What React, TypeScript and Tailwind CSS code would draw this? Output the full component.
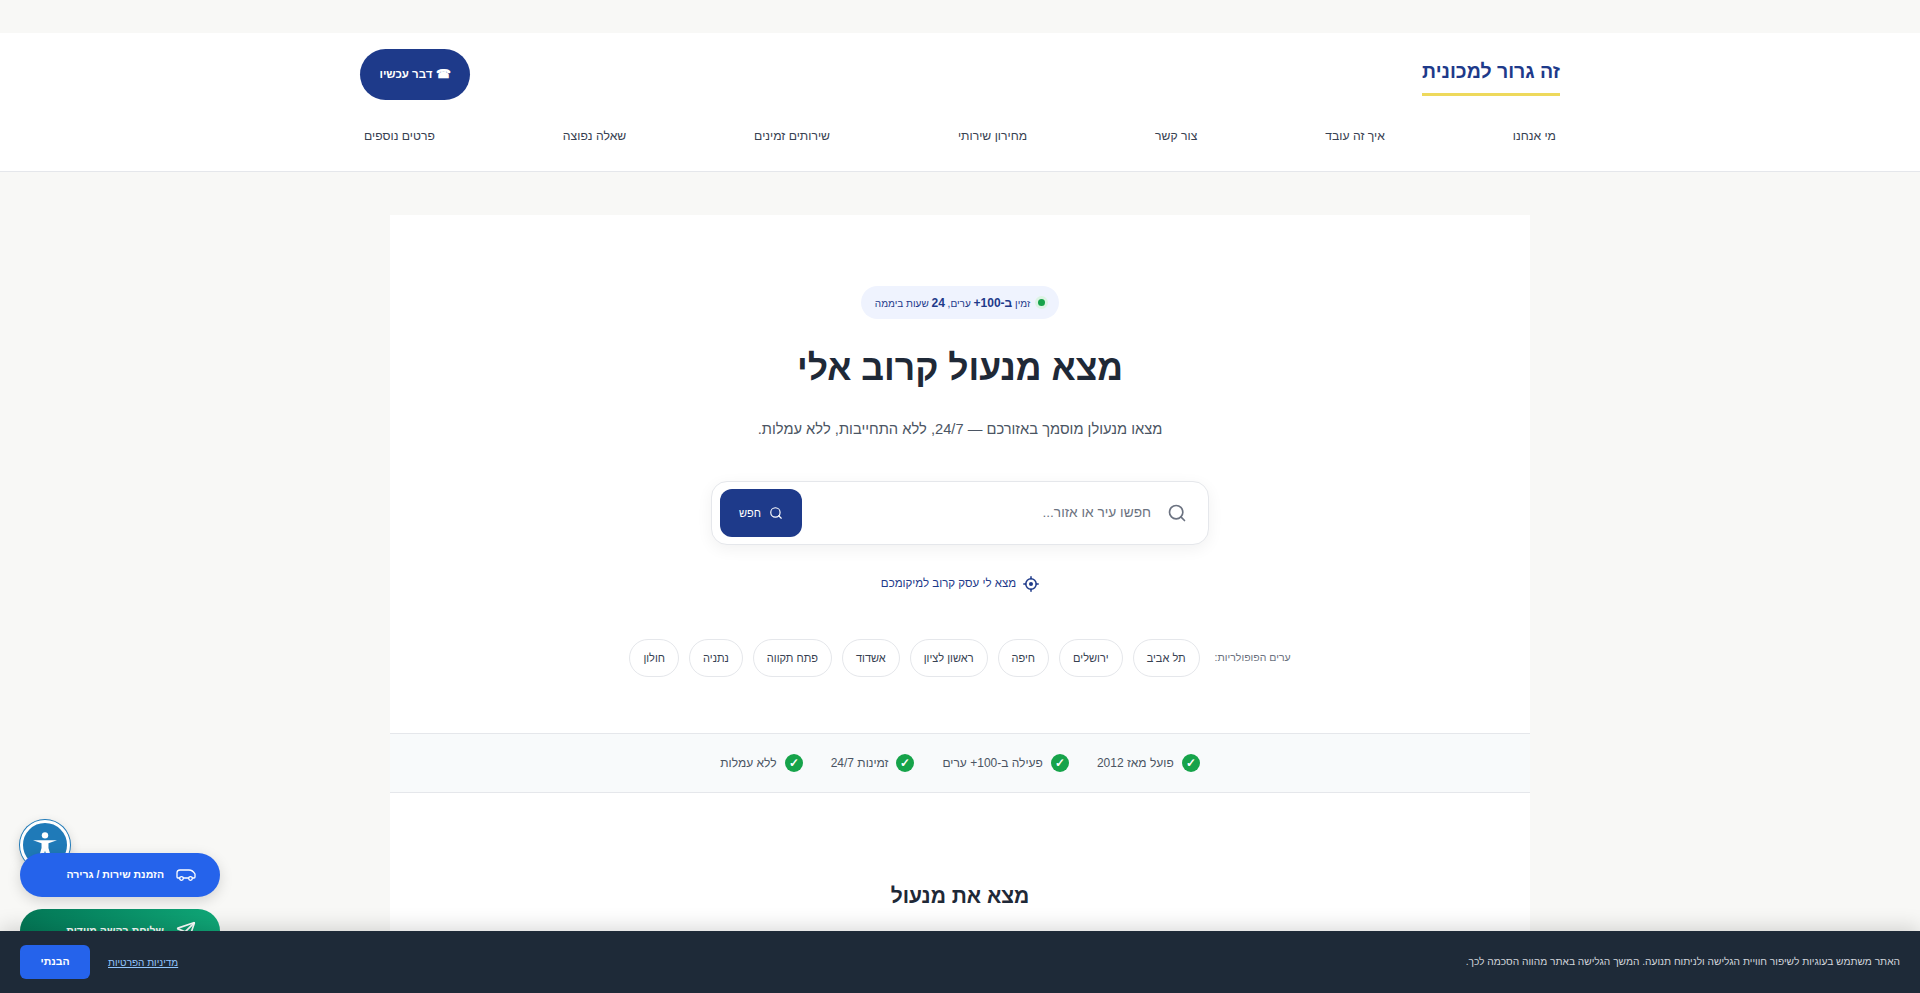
import { Search, Send } from "lucide-react";

const NAV = ["מי אנחנו", "איך זה עובד", "צור קשר", "מחירון שירותי", "שירותים זמינים", "שאלה נפוצה", "פרטים נוספים"];
const CITIES = ["תל אביב", "ירושלים", "חיפה", "ראשון לציון", "אשדוד", "פתח תקווה", "נתניה", "חולון"];
const TRUST = ["פועל מאז 2012", "פעילה ב-100+ ערים", "זמינות 24/7", "ללא עמלות"];

export default function App() {
  return (
    <div dir="rtl" className="relative h-screen overflow-hidden bg-[#f8f8f6] font-['Liberation_Sans',sans-serif] text-[#1f2937]">
      <header className="mt-[33px] h-[139px] border-b border-[#e5e7eb] bg-white">
        <div className="mx-auto w-[1200px]">
          <div className="flex h-[67px] items-start justify-between pt-[16px]">
            <div className="mt-[6px] border-b-[3px] border-[#eed95c] pb-[5px] text-[19.5px] font-bold leading-[33px] text-[#1e3a8a]">זה גרור למכונית</div>
            <button className="flex h-[51px] w-[110px] items-center justify-center rounded-full bg-[#1e3a8a] text-[11.5px] font-bold text-white">☎ דבר עכשיו</button>
          </div>
          <nav className="mt-[27px] flex justify-between px-[4px] text-[12.2px] leading-[18px] text-[#374151]">
            {NAV.map((n) => (
              <a key={n}>{n}</a>
            ))}
          </nav>
        </div>
      </header>

      <main className="mx-auto mt-[43px] w-[1140px] bg-white pb-[200px]">
        <section className="flex flex-col items-center pt-[71px]">
          <div className="flex h-[33px] items-center gap-[8px] rounded-full bg-[#eff3fe] px-[14px] text-[10px] text-[#1e3a8a]">
            <span className="h-[7px] w-[7px] rounded-full bg-[#16a34a] shadow-[0_0_0_3px_#dcf3e4]" />
            <span>
              זמין <b className="text-xs">ב-100+</b> ערים, <b className="text-xs">24</b> שעות ביממה
            </span>
          </div>
          <h1 className="mt-[21px] text-[35.5px] font-bold leading-[56px] text-[#1f2937]">מצא מנעול קרוב אלי</h1>
          <p className="mt-[20px] text-[14.7px] leading-[27px] text-[#4b5563]">מצאו מנעולן מוסמך באזורכם — 24/7, ללא התחייבות, ללא עמלות.</p>

          <div className="mt-[38px] flex h-[64px] w-[498px] items-center justify-between rounded-[16px] border border-[#e5e7eb] bg-white pl-[8px] pr-[21px] shadow-[0_4px_16px_rgba(0,0,0,0.06)]">
            <div className="flex items-center gap-[16px] text-[13.7px] text-[#6b7280]">
              <Search className="h-[20px] w-[20px]" />
              <span>חפשו עיר או אזור...</span>
            </div>
            <button className="flex h-[48px] w-[82px] items-center justify-center gap-[8px] rounded-[12px] bg-[#1e3a8a] text-[11px] text-white">
              <Search className="h-[14px] w-[14px]" />
              <span>חפש</span>
            </button>
          </div>

          <div className="mt-[30px] flex h-[17px] items-center gap-[7px] text-[11.5px] text-[#1e3a8a]">
            <svg viewBox="0 0 16 16" className="h-[16px] w-[16px]" fill="none" stroke="currentColor" strokeWidth="1.5" strokeLinecap="round">
              <circle cx="8" cy="8" r="5.2" />
              <circle cx="8" cy="8" r="2" fill="currentColor" stroke="none" />
              <path d="M8 0.8V2.8M8 13.2V15.2M0.8 8H2.8M13.2 8H15.2" />
            </svg>
            <span>מצא לי עסק קרוב למיקומכם</span>
          </div>

          <div className="mt-[47px] flex items-center gap-[10px]">
            <span className="ml-[5px] text-[10.5px] text-[#6b7280]">ערים הפופולריות:</span>
            {CITIES.map((c) => (
              <span key={c} className="flex h-[38px] items-center rounded-full border border-[#e5e7eb] bg-white px-[13px] text-[11px] text-[#374151]">
                {c}
              </span>
            ))}
          </div>
        </section>

        <div className="mt-[56px] flex h-[60px] items-center justify-center gap-[28px] border-y border-[#e5e7eb] bg-[#f8fafb] text-xs text-[#4b5563]">
          {TRUST.map((t) => (
            <div key={t} className="flex items-center gap-[8px]">
              <span className="flex h-[18px] w-[18px] items-center justify-center rounded-full bg-[#16a34a] text-[12px] font-bold text-white">✓</span>
              <span>{t}</span>
            </div>
          ))}
        </div>

        <h2 className="mt-[85px] text-center text-[21px] font-bold leading-[36px] text-[#1f2937]">מצא את מנעול</h2>
      </main>

      <div className="absolute left-[20px] top-[820px] flex h-[50px] w-[50px] items-center justify-center rounded-full border-[3px] border-white bg-[#1f7ab8] shadow-[0_0_0_1px_#1f7ab8,0_4px_12px_rgba(0,0,0,0.2)]">
        <svg viewBox="0 0 24 24" className="mb-[2px] h-[32px] w-[32px]" fill="#fff">
          <circle cx="12" cy="5.5" r="2.4" />
          <path d="M3 9.2H21L14.6 11.4V15L16.6 22H13.6L12 17L10.4 22H7.4L9.4 15V11.4Z" />
        </svg>
      </div>
      <div className="absolute left-[20px] top-[853px] flex h-[44px] w-[200px] items-center gap-[12px] rounded-full bg-[#2563eb] pr-[24px] text-[10.5px] font-bold text-white shadow-[0_4px_14px_rgba(0,0,0,0.15)]">
        <svg viewBox="0 0 20 12" className="h-[12px] w-[20px]" fill="none" stroke="currentColor" strokeWidth="1.3">
          <path d="M4 1H13C15.6 1 17.6 2.6 19 5V8A1 1 0 0 1 18 9H2A1 1 0 0 1 1 8V4A3 3 0 0 1 4 1Z" />
          <circle cx="5.5" cy="9.5" r="1.8" fill="#2563eb" />
          <circle cx="14.5" cy="9.5" r="1.8" fill="#2563eb" />
        </svg>
        <span>הזמנת שירות / גרירה</span>
      </div>
      <div className="absolute left-[20px] top-[909px] flex h-[44px] w-[200px] items-center gap-[12px] rounded-full bg-gradient-to-r from-[#047857] to-[#10a878] pr-[24px] text-[10.5px] font-bold text-white">
        <Send className="h-[20px] w-[20px]" />
        <span>שליחת בקשה מיידית</span>
      </div>

      <div className="absolute inset-x-0 bottom-0 flex h-[62px] items-center justify-between bg-[#1e2a38] px-[20px] shadow-[0_-4px_20px_rgba(0,0,0,0.15)]">
        <p className="text-[10.2px] text-[#d1d5db]">האתר משתמש בעוגיות לשיפור חוויית הגלישה ולניתוח תנועה. המשך הגלישה באתר מהווה הסכמה לכך.</p>
        <div className="flex items-center gap-[18px]">
          <a className="text-[10px] text-[#93c5fd] underline">מדיניות הפרטיות</a>
          <button className="flex h-[34px] w-[70px] items-center justify-center rounded-[6px] bg-[#2563eb] text-[10.5px] font-bold text-white">הבנתי</button>
        </div>
      </div>
    </div>
  );
}
